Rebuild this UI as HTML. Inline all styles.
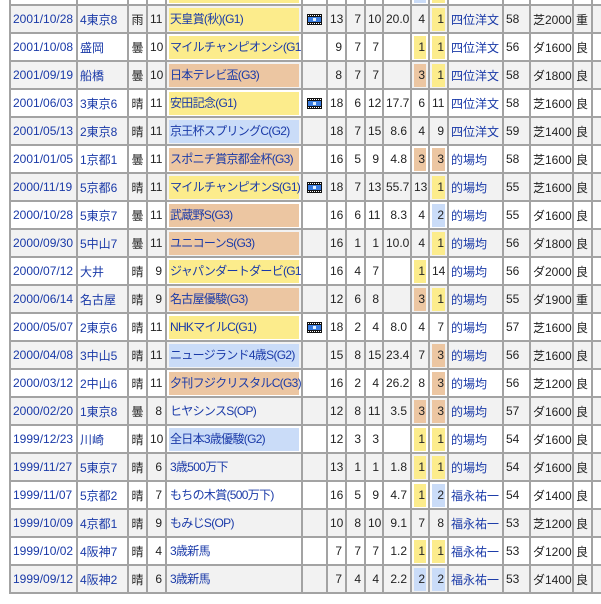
<!DOCTYPE html>
<html><head><meta charset="utf-8">
<style>
html,body{margin:0;padding:0;background:#fff;width:601px;height:604px;overflow:hidden;position:relative}
table{position:absolute;left:9px;top:-24px;border-collapse:collapse;table-layout:fixed;width:632px;font-family:"Liberation Sans","Noto Sans CJK JP",sans-serif;font-size:12px;color:#222}
tr{height:28px}
td{border:2px solid #a3a3a3;height:26px;padding:0 2px;white-space:nowrap;overflow:hidden;box-sizing:border-box}
tr.g td{background:#f2f2f2}
tr.w td{background:#fff}
a{color:#1a3aa8;text-decoration:none}
.r{text-align:right;padding-right:3px}
.c{text-align:center}
.b{display:block;height:23px;line-height:23px}
.Y{background:#fcec8c}.O{background:#ecc6a2}.B{background:#cadcf8}
td.n{padding:0 2px}
td.n .b{text-align:right;padding-right:1px}
td.rn{padding:0 2px;text-align:left}
td.rn .b{text-align:left;padding-left:1px;letter-spacing:-0.7px}
</style></head><body>
<table>
<colgroup><col style="width:67px"><col style="width:51px"><col style="width:19px"><col style="width:19px"><col style="width:136px"><col style="width:25px"><col style="width:19px"><col style="width:19px"><col style="width:18px"><col style="width:28px"><col style="width:18px"><col style="width:19px"><col style="width:55px"><col style="width:27px"><col style="width:43px"><col style="width:19px"><col style="width:50px"></colgroup>
<tbody id="tb">
<tr class="w"><td></td><td></td><td></td><td></td><td class="rn"><span class="b Y"></span></td><td></td><td></td><td></td><td></td><td></td><td class="n"><span class="b B"></span></td><td class="n"><span class="b Y"></span></td><td></td><td></td><td></td><td></td><td></td></tr>
</tbody></table>
<script>
var film='<svg width="15" height="11" viewBox="0 0 15 11" style="vertical-align:middle"><rect width="15" height="11" fill="#111"/><g fill="#fff"><rect x="1" y="1" width="1" height="1"/><rect x="3" y="1" width="1" height="1"/><rect x="5" y="1" width="1" height="1"/><rect x="7" y="1" width="1" height="1"/><rect x="9" y="1" width="1" height="1"/><rect x="11" y="1" width="1" height="1"/><rect x="13" y="1" width="1" height="1"/><rect x="1" y="9" width="1" height="1"/><rect x="3" y="9" width="1" height="1"/><rect x="5" y="9" width="1" height="1"/><rect x="7" y="9" width="1" height="1"/><rect x="9" y="9" width="1" height="1"/><rect x="11" y="9" width="1" height="1"/><rect x="13" y="9" width="1" height="1"/></g><rect x="1" y="3" width="13" height="5" fill="#3a7de0"/><rect x="6" y="4" width="3" height="3" fill="#dfefff"/></svg>';
var D=[
["2001/10/28","4東京8","雨","11","天皇賞(秋)(G1)","Y",1,"13","7","10","20.0","4","1Y","四位洋文","58","芝2000","重"],
["2001/10/08","盛岡","曇","10","マイルチャンピオンシ(G1)","Y",0,"9","7","7","","1Y","1Y","四位洋文","56","ダ1600","良"],
["2001/09/19","船橋","曇","10","日本テレビ盃(G3)","O",0,"8","7","7","","3O","1Y","四位洋文","58","ダ1800","良"],
["2001/06/03","3東京6","晴","11","安田記念(G1)","Y",1,"18","6","12","17.7","6","11","四位洋文","58","芝1600","良"],
["2001/05/13","2東京8","晴","11","京王杯スプリングC(G2)","B",0,"18","7","15","8.6","4","9","四位洋文","59","芝1400","良"],
["2001/01/05","1京都1","曇","11","スポニチ賞京都金杯(G3)","O",0,"16","5","9","4.8","3O","3O","的場均","58","芝1600","良"],
["2000/11/19","5京都6","晴","11","マイルチャンピオンS(G1)","Y",1,"18","7","13","55.7","13","1Y","的場均","55","芝1600","良"],
["2000/10/28","5東京7","曇","11","武蔵野S(G3)","O",0,"16","6","11","8.3","4","2B","的場均","55","ダ1600","良"],
["2000/09/30","5中山7","曇","11","ユニコーンS(G3)","O",0,"16","1","1","10.0","4","1Y","的場均","56","ダ1800","良"],
["2000/07/12","大井","晴","9","ジャパンダートダービ(G1)","Y",0,"16","4","7","","1Y","14","的場均","56","ダ2000","良"],
["2000/06/14","名古屋","晴","9","名古屋優駿(G3)","O",0,"12","6","8","","3O","1Y","的場均","55","ダ1900","重"],
["2000/05/07","2東京6","晴","11","NHKマイルC(G1)","Y",1,"18","2","4","8.0","4","7","的場均","57","芝1600","良"],
["2000/04/08","3中山5","晴","11","ニュージランド4歳S(G2)","B",0,"15","8","15","23.4","7","3O","的場均","56","芝1600","良"],
["2000/03/12","2中山6","晴","11","夕刊フジクリスタルC(G3)","O",0,"16","2","4","26.2","8","3O","的場均","56","芝1200","良"],
["2000/02/20","1東京8","曇","8","ヒヤシンスS(OP)","",0,"12","8","11","3.5","3O","3O","的場均","57","ダ1600","良"],
["1999/12/23","川崎","晴","10","全日本3歳優駿(G2)","B",0,"12","3","3","","1Y","1Y","的場均","54","ダ1600","良"],
["1999/11/27","5東京7","晴","6","3歳500万下","",0,"13","1","1","1.8","1Y","1Y","的場均","54","ダ1600","良"],
["1999/11/07","5京都2","晴","7","もちの木賞(500万下)","",0,"16","5","9","4.7","1Y","2B","福永祐一","54","ダ1400","良"],
["1999/10/09","4京都1","晴","9","もみじS(OP)","",0,"10","8","10","9.1","7","8","福永祐一","53","芝1200","良"],
["1999/10/02","4阪神7","晴","4","3歳新馬","",0,"7","7","7","1.2","1Y","1Y","福永祐一","53","ダ1200","良"],
["1999/09/12","4阪神2","晴","6","3歳新馬","",0,"7","4","4","2.2","2B","2B","福永祐一","53","ダ1400","良"]
];
function pos(v){var m=v.match(/^(\d+)([YOB])$/);if(m)return '<td class="n"><span class="b '+m[2]+'">'+m[1]+'</span></td>';return '<td class="r">'+v+'</td>';}
var h='';
D.forEach(function(d,i){
h+='<tr class="'+(i%2==0?'g':'w')+'">';
h+='<td><a>'+d[0]+'</a></td><td><a>'+d[1]+'</a></td><td class="c">'+d[2]+'</td><td class="r">'+d[3]+'</td>';
h+='<td class="rn"><span class="b '+d[5]+'"><a>'+d[4]+'</a></span></td>';
h+='<td class="c" style="padding:0">'+(d[6]?film:'')+'</td>';
h+='<td class="r">'+d[7]+'</td><td class="r">'+d[8]+'</td><td class="r">'+d[9]+'</td><td class="r">'+d[10]+'</td>';
h+=pos(d[11])+pos(d[12]);
h+='<td><a>'+d[13]+'</a></td><td>'+d[14]+'</td><td class="r">'+d[15]+'</td><td>'+d[16]+'</td><td></td></tr>';
});
document.getElementById('tb').insertAdjacentHTML('beforeend',h);
</script>
</body></html>
